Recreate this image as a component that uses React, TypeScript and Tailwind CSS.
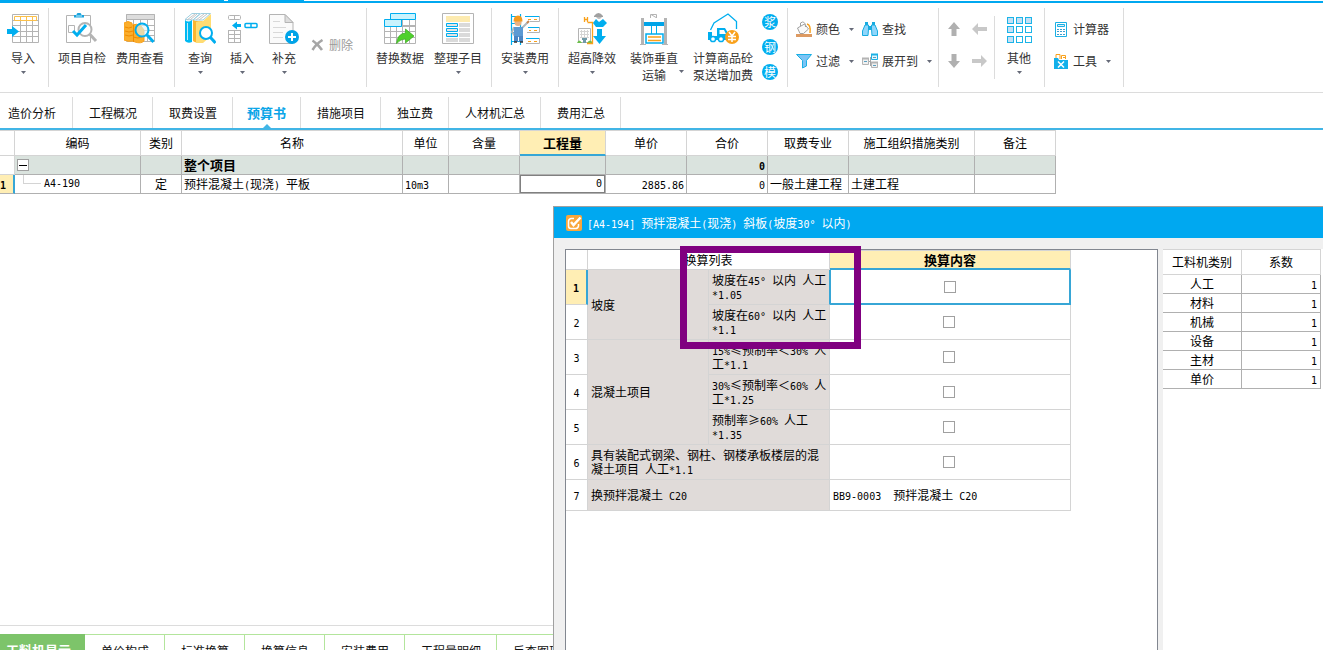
import { Fragment, useState, type ReactNode } from 'react'

const BLUE = '#00aeef'
const GRAY = '#b4b4b4'
const ORANGE = '#f9a11b'

/* ---------- text ---------- */

// Half-width runs are set in a narrow mono face so two of them take one Chinese character
function Mixed({ text }: { text: string }) {
  const parts = text.split(/([\x20-\x7e°]+)/)
  return (
    <>
      {parts.map((p, i) =>
        i % 2 === 1 ? (
          <span key={i} className="whitespace-pre-wrap font-['DejaVu_Sans_Mono',monospace] text-[10px] leading-none">{p}</span>
        ) : (
          <Fragment key={i}>{p}</Fragment>
        ),
      )}
    </>
  )
}

function Caret() {
  return (
    <svg viewBox="0 0 5 3" className="w-[5px] h-[3px] shrink-0" aria-hidden="true">
      <path d="M0 0h5L2.5 3z" fill="#666a78" />
    </svg>
  )
}

/* ---------- ribbon icons ---------- */

function Icon({ children }: { children: ReactNode }) {
  return (
    <svg viewBox="0 0 32 32" className="w-8 h-8 shrink-0" fill="none" aria-hidden="true">
      {children}
    </svg>
  )
}

const ImportIcon = () => (
  <Icon>
    <path d="M5.5 1.5h26v28h-26zM5.5 7.5h26M5.5 12.5h26M5.5 18.5h26M5.5 23.5h26M13.5 7v22M19.5 7v22M25.5 7v22" stroke={GRAY} />
    <path d="M7.5 3.5h22v4h-22zM13.5 3v5M19.5 3v5M25.5 3v5" stroke="#fbc04a" />
    <path d="M0 16h5v-3l7 5.5-7 5.5v-3H0z" fill={BLUE} />
  </Icon>
)

const CheckIcon = () => (
  <Icon>
    <path d="M.5 2.5h24v27H.5z" stroke={GRAY} />
    <path d="M8 4.5V2h2.500c0-3 5-3 5 0H18v2.500z" fill="#1aa3dc" />
    <path d="M10 3h6" stroke="#bdeafa" />
    <path d="M2.5 12.500h6v7h-6z" stroke={GRAY} />
    <circle cx="19" cy="16.5" r="6.500" fill="#fff" stroke={GRAY} strokeWidth="2" />
    <path d="M24 21.500l6 6.500" stroke={GRAY} strokeWidth="3" />
    <path d="M7 18l4 4L20 12" stroke={BLUE} strokeWidth="3" />
  </Icon>
)

const CostIcon = () => (
  <Icon>
    <path d="M2.5 1.5h28v27h-28zM3 12.5h27M3 17.5h27M3 22.5h27M9.5 7v21M16.5 7v21M23.5 7v21" stroke={GRAY} />
    <path d="M2.5 1.5h28v5h-28z" fill="#ddd" stroke={GRAY} />
    <path d="M0 10q4-3 8 0v2q5-2 9 1l3 4v11q-3 3-9 1l-2-1q-5 1-9-1z" fill="#fbae2c" stroke={ORANGE} />
    <path d="M1 14q4 2 7 0M1 18q4 2 8 0M1 22q4 2 8 0M9 24q5 2 9 0M9.5 12v17" stroke="#f08b00" />
    <circle cx="18" cy="17" r="6.5" fill="#d9f3fc" fillOpacity=".6" stroke={BLUE} strokeWidth="2" />
    <path d="M23 22l6.5 7" stroke={BLUE} strokeWidth="3" />
  </Icon>
)

const QueryIcon = () => (
  <Icon>
    <path d="M1 6.5L8 .5h8L9 7zM9 7L17 .5h9.500L19 7z" fill="#fff" stroke="#9fcfe0" />
    <path d="M3 7l8-6M6 7l7-6M12 7l8-6M15 7l8-6" stroke="#c4c4c4" />
    <path d="M1 7q3 3 7 0v22q-4 2-7-1z" fill="#00b9f2" />
    <path d="M3.5 10v17" stroke="#bdeafa" />
    <path d="M9 7q4 2 9 1v20q-5 3-9 0z" fill="#fbb62f" />
    <path d="M12 9l7-1L27 1v22l-8 7h-7z" fill="#ffdc73" />
    <circle cx="22" cy="20" r="6" fill="#fff" stroke={BLUE} strokeWidth="2" />
    <path d="M26.5 24.5l5 5.500" stroke={BLUE} strokeWidth="3" />
  </Icon>
)

const InsertIcon = () => (
  <Icon>
    <rect x="2.5" y="2.5" width="12" height="4" rx="1" stroke={GRAY} />
    <path d="M8.500 2v5M8.500 17v12M2.500 21.500h12M2.500 25.500h12" stroke={GRAY} />
    <rect x="2.5" y="17.5" width="12" height="12" stroke={GRAY} />
    <path d="M6 12.500l5-4v2.500h4v3h-4v2.500z" fill={BLUE} />
    <rect x="19" y="10.5" width="12" height="4" rx="1" stroke={BLUE} strokeWidth="1.5" />
    <path d="M25 10v5" stroke={BLUE} strokeWidth="1.5" />
  </Icon>
)

const AddDocIcon = () => (
  <Icon>
    <path d="M1.5 1.5H17l8 8v21H1.500z" fill="#fafafa" stroke={GRAY} />
    <path d="M17 1.5v8h8z" fill="#ddd" stroke={GRAY} />
    <path d="M5 8.500h7M5 14.500h13M5 19.500h10M5 24.500h10" stroke="#d8d8d8" />
    <circle cx="24" cy="24" r="7" fill="#00a4e8" />
    <path d="M24 20v8M20 24h8" stroke="#fff" strokeWidth="2" />
  </Icon>
)

const ReplaceIcon = () => (
  <Icon>
    <path d="M.5 13.500h31v17H.5zM6.500 13.500V30M12.500 13.500V30M18.500 7V30M25.500 7V30M31.500 7v23M18 12.500h13.500M0 18.500h32M0 24.500h32" stroke={GRAY} />
    <path d="M6.500.5h25v6h-25zM.5 6.500h17v7H.5z" fill="#c9f3fd" stroke={BLUE} />
    <path d="M12.500 30.500q1-10 9-10.500v-4l8.500 7-8.500 7v-4q-5 0-9 4.500z" fill="#4fd02c" stroke="#3aa81e" strokeWidth=".7" />
  </Icon>
)

const ArrangeIcon = () => (
  <Icon>
    <path d="M.5.5h31v30H.5z" stroke={GRAY} />
    <path d="M4 3h24v6H4z" fill="#fdebb0" />
    <path d="M17 10h11v4H17zM17 15h11v4H17zM17 20h11v4H17zM17 25h11v4H17zM4 25h12v4H4z" fill="#dadada" />
    <path d="M4.500 10.500h11v3h-11zM4.500 15.500h11v3h-11zM4.500 20.500h11v3h-11z" fill="#e4e4e4" stroke={BLUE} />
  </Icon>
)

const InstallIcon = () => (
  <Icon>
    <path d="M2.500 1v31M11.500 1v31M2 3.500h10M2 10.500h4M2 19.500h3M2 28.500h10" stroke={BLUE} strokeWidth="1.200" />
    <path d="M30.500 3v5.500H21M30.500 14v5.500H18M30.500 25v5.500H17" stroke={GRAY} />
    <path d="M16 3.500h14M19 14.500h11M17 25.500h13" stroke={BLUE} />
    <path d="M19 6.500h3M25 6.500h3M20 17.500h2M25 17.500h3M19 28.500h3M25 28.500h3" stroke={ORANGE} />
    <path d="M12 16l7-7M5 14l-2 5 3 4" stroke="#b0b7bd" strokeWidth="2" />
    <path d="M18 10l2-2" stroke="#c98550" strokeWidth="2" />
    <circle cx="9" cy="9.500" r="3.500" fill="#e9b183" />
    <path d="M4.500 8.500q0-6 4.500-6t4.500 6z" fill="#f59a1c" />
    <path d="M5 14h9v10H5z" fill="#5c9ad3" />
    <path d="M5 23h4v6H5zM10 23h4v6h-4z" fill="#4b86c4" />
    <path d="M5 29h3M11 29h3" stroke="#333" strokeWidth="1.500" />
  </Icon>
)

const HighRiseIcon = () => (
  <Icon>
    <path d="M2.500 15.500h12v14h-12z" fill="#fff" stroke={GRAY} />
    <path d="M5.500 17v8M8.500 17v8M11.500 17v8M4 18.500h9M4 21.500h9M4 24.500h9" stroke="#d4d4d4" />
    <path d="M6 25h5v2H6zM7 27h3v3H7z" fill="#6f9aa8" />
    <path d="M1 30q2-5 5 0zM11 30q3-5 6 0z" fill="#6cbf4b" />
    <path d="M8.500 4v5M11.500 4v5M8.500 6.500h3M11.500 9.500h6M16.500 9v21.500H11" stroke={ORANGE} strokeWidth="1.300" />
    <path d="M18 3q4.500-6 9 0v1h-9z" fill="#a0a0a0" />
    <path d="M20 4h6q-3 4-6 0z" fill="#bbb" />
    <path d="M17 10l3-4 3 3 4-3 4 4-4 4h-7z" fill={BLUE} />
    <path d="M21 16h5v7h4l-6.500 8-6.500-8h4z" fill={BLUE} />
  </Icon>
)

const LiftIcon = () => (
  <Icon>
    <path d="M4.500 5v26M27.500 5v26" stroke={GRAY} strokeWidth="3" />
    <path d="M2 31.500h6M24 31.500h6" stroke={GRAY} />
    <path d="M12.500 5V1.500h6V5M13 1.500l5 3" stroke={GRAY} />
    <path d="M6 9h20v4H6z" fill="#00a4e8" />
    <path d="M13.500 13v8M18.500 13v8" stroke={BLUE} />
    <path d="M8 21h17v9H8z" stroke={BLUE} strokeWidth="1.500" />
    <path d="M10 24h13M10 27.500h13" stroke={ORANGE} strokeWidth="1.600" />
  </Icon>
)

const TruckIcon = () => (
  <Icon>
    <path d="M3.500 17L7 10 21 1l8.500 7.500V16" stroke={BLUE} strokeWidth="1.300" />
    <path d="M1 19h4v4h5v-8h8l3 5v7H1z" fill={BLUE} />
    <path d="M12.500 17h4.500l2 4h-6.500z" fill="#fff" />
    <circle cx="6" cy="26" r="2.600" fill="#fff" stroke={BLUE} strokeWidth="1.500" />
    <circle cx="14" cy="26" r="2.600" fill="#fff" stroke={BLUE} strokeWidth="1.500" />
    <circle cx="25" cy="24" r="7" fill={ORANGE} />
    <path d="M22 19l3 4 3-4M21 23.500h8M21 26.500h8M25 23v6" stroke="#fff" strokeWidth="1.500" />
  </Icon>
)

const OthersIcon = () => (
  <Icon>
    {[4, 13, 23].map((y, r) =>
      [4, 13, 22].map((x, c) => (
        <rect key={`${x}-${y}`} x={x + 0.5} y={y + 0.5} width="6" height="6" fill={r === 0 || c === 0 ? '#c5e0f5' : '#fff'} stroke="#1bb4e8" />
      )),
    )}
  </Icon>
)

/* ---------- small icons ---------- */

function Small({ children }: { children: ReactNode }) {
  return (
    <svg viewBox="0 0 16 16" className="w-4 h-4 shrink-0" fill="none" aria-hidden="true">
      {children}
    </svg>
  )
}

const BucketIcon = () => (
  <Small>
    <path d="M0 13h16v3H0z" fill="#dd9a62" />
    <path d="M1.500 7l7-4 4 5-5 4.500H4z" fill="#fafafa" stroke="#a0a0a0" />
    <path d="M4.500 5q-1-4 2-4t3 5" stroke="#a0a0a0" />
    <path d="M11 3q4 1 3 9" stroke={ORANGE} strokeWidth="1.500" />
  </Small>
)

const FunnelIcon = () => (
  <Small>
    <path d="M.5 1.500h15L10.500 7.500V13l-4 2V7.500z" fill="#7cc4f5" stroke="#1bb0e4" />
  </Small>
)

const BinocularsIcon = () => (
  <Small>
    <path d="M3 4h3.500v4L6 14.500H.5V10zM13 4H9.500v4l.5 6.500h5.500V10z" fill="#8fd6fb" stroke="#16abe0" />
    <path d="M3 1h3v3H3zM10 1h3v3h-3zM6.500 5h3v4h-3z" fill="#16abe0" />
  </Small>
)

const ExpandIcon = () => (
  <Small>
    <path d="M6 8.500h3M8.500 4v9" stroke="#a5a5a5" />
    <path d="M9.500 1.500h6v5h-6z" fill="#e4f5fc" stroke="#1bb0e4" />
    <path d="M.5 5.500h6v6h-6zM9.500 9.500h6v5h-6z" fill="#f0f0f0" stroke="#b4b4b4" />
    <path d="M9 1.500h7" stroke="#1bb0e4" strokeWidth="2" />
    <path d="M0 5.500h7M9 9.500h7" stroke="#b4b4b4" strokeWidth="2" />
    <path d="M2 8.500h3M11 4.500h3M11 12.500h3" stroke="#5a9fc0" />
  </Small>
)

const CalculatorIcon = () => (
  <Small>
    <path d="M2.500 1.500h11v14h-11z" fill="#fff" stroke="#1bb0e4" />
    <path d="M4.500 3.500h7v2h-7z" fill="#d9f0fb" stroke="#1bb0e4" />
    <path d="M4 8.500h8M4 10.500h8M4 13.500h8" stroke="#3f9fd0" strokeDasharray="2 1" />
  </Small>
)

const ToolboxIcon = () => (
  <Small>
    <path d="M3 6V1.500h4V6M8.500 6V2.500h4V6" fill="#fff" stroke={ORANGE} />
    <path d="M10 4.500h3" stroke={ORANGE} />
    <path d="M1 5h4l1 2h9v9H1z" fill="#12b0ea" />
    <path d="M5 8.500l6 6M11 8.500l-6 6" stroke="#fff" strokeWidth="1.500" />
  </Small>
)

const DeleteIcon = () => (
  <svg viewBox="0 0 13 12" className="w-[13px] h-3 shrink-0" fill="none" aria-hidden="true">
    <path d="M1.500 1.500Q7 5 11 11M11.500 1Q5 5 1.500 11" stroke="#a6a6a6" strokeWidth="2.500" />
  </svg>
)

function MoveIcon({ d, color }: { d: string; color: string }) {
  return (
    <Small>
      <path d={d} fill={color} />
    </Small>
  )
}

/* ---------- ribbon ---------- */

function Group({ className = '', children }: { className?: string; children: ReactNode }) {
  return <div className={`flex shrink-0 items-start border-r border-[#dcdcdc] ${className}`}>{children}</div>
}

type BigProps = { icon: ReactNode; label: string; second?: string; menu?: boolean; width: string }

function BigButton({ icon, label, second, menu, width }: BigProps) {
  return (
    <button type="button" className={`flex shrink-0 flex-col items-center pt-[5px] ${width}`}>
      {icon}
      <span className="mt-1 h-[17px] whitespace-nowrap leading-[17px]">{label}</span>
      {second ? (
        <span className="relative h-[17px] whitespace-nowrap leading-[17px]">
          {second}
          {menu && <span className="absolute -right-[18px] top-1 leading-none"><Caret /></span>}
        </span>
      ) : (
        menu && <span className="mt-[5px]"><Caret /></span>
      )}
    </button>
  )
}

function SmallButton({ icon, label, menu }: { icon: ReactNode; label: string; menu?: boolean }) {
  return (
    <button type="button" className="flex h-8 items-center gap-1 whitespace-nowrap">
      {icon}
      <span>{label}</span>
      {menu && <span className="ml-[5px]"><Caret /></span>}
    </button>
  )
}

const moves = [
  { label: '上移', d: 'M8 1l6 7h-3.500v7h-5V8H2z', color: '#b0b0b0' },
  { label: '升级', d: 'M0 8l6-6v4h9v4H6v4z', color: '#c8c8c8' },
  { label: '下移', d: 'M8 15l6-7h-3.500V1h-5v7H2z', color: '#b0b0b0' },
  { label: '降级', d: 'M15 8L9 2v4H0v4h9v4z', color: '#c8c8c8' },
]

function Ribbon() {
  return (
    <header className="shrink-0">
      <div className="flex h-px bg-white">
        <span className="w-56 bg-[#00a8f0]" />
        <span className="ml-1 w-[76px] bg-[#00a8f0]" />
      </div>
      <div className="h-0.5 bg-[#00a8f0]" />
      <div className="flex h-[90px] border-b border-[#dcdcdc] py-[5px] font-['Noto_Sans_CJK_SC',sans-serif] text-xs text-[#333]">
        <Group className="pl-[3px] pr-[5px]">
          <BigButton icon={<ImportIcon />} label="导入" menu width="w-10" />
        </Group>
        <Group className="pl-1 pr-[5px]">
          <BigButton icon={<CheckIcon />} label="项目自检" width="w-[58px]" />
          <BigButton icon={<CostIcon />} label="费用查看" width="w-[58px]" />
        </Group>
        <Group className="pl-1 pr-[13px]">
          <BigButton icon={<QueryIcon />} label="查询" menu width="w-[42px]" />
          <BigButton icon={<InsertIcon />} label="插入" menu width="w-[42px]" />
          <BigButton icon={<AddDocIcon />} label="补充" menu width="w-[42px]" />
          <button type="button" disabled className="mt-[29px] ml-1.5 flex h-4 items-center gap-[5px] text-[#9a9a9a]">
            <DeleteIcon />
            删除
          </button>
        </Group>
        <Group className="px-1">
          <BigButton icon={<ReplaceIcon />} label="替换数据" width="w-[58px]" />
          <BigButton icon={<ArrangeIcon />} label="整理子目" menu width="w-[58px]" />
        </Group>
        <Group className="px-1">
          <BigButton icon={<InstallIcon />} label="安装费用" menu width="w-[58px]" />
        </Group>
        <Group className="pl-1 pr-1.5">
          <BigButton icon={<HighRiseIcon />} label="超高降效" menu width="w-[58px]" />
          <BigButton icon={<LiftIcon />} label="装饰垂直" second="运输" menu width="w-[66px]" />
          <BigButton icon={<TruckIcon />} label="计算商品砼" second="泵送增加费" width="w-[72px]" />
          <div className="flex w-[22px] flex-col items-center gap-[9px] pt-1.5">
            {['浆', '钢', '模'].map(c => (
              <button key={c} type="button" className="size-4 rounded-full bg-[#00aeef] text-xs leading-4 text-white">{c}</button>
            ))}
          </div>
        </Group>
        <Group className="pl-2 pt-[5px]">
          <div className="w-[66px]">
            <SmallButton icon={<BucketIcon />} label="颜色" menu />
            <SmallButton icon={<FunnelIcon />} label="过滤" menu />
          </div>
          <div className="w-[76px]">
            <SmallButton icon={<BinocularsIcon />} label="查找" />
            <SmallButton icon={<ExpandIcon />} label="展开到" menu />
          </div>
        </Group>
        <Group className="my-2 pl-0.5 pr-px">
          <div className="-mt-[3px] grid grid-cols-2">
            {moves.map(m => (
              <button key={m.label} type="button" aria-label={m.label} className="flex h-8 w-[26px] items-center justify-center">
                <MoveIcon d={m.d} color={m.color} />
              </button>
            ))}
          </div>
        </Group>
        <Group className="pr-px">
          <BigButton icon={<OthersIcon />} label="其他" menu width="w-12" />
        </Group>
        <Group className="pt-[5px] pl-2 pr-3">
          <div>
            <SmallButton icon={<CalculatorIcon />} label="计算器" />
            <SmallButton icon={<ToolboxIcon />} label="工具" menu />
          </div>
        </Group>
      </div>
    </header>
  )
}

/* ---------- main tabs ---------- */

const mainTabs = [
  { label: '造价分析', pad: 'pl-2 pr-4' },
  { label: '工程概况', pad: 'pl-4 pr-[15px]' },
  { label: '取费设置', pad: 'pl-4 pr-[15px]' },
  { label: '预算书', pad: 'px-3.5' },
  { label: '措施项目', pad: 'pl-4 pr-[15px]' },
  { label: '独立费', pad: 'pl-4 pr-[15px]' },
  { label: '人材机汇总', pad: 'pl-4 pr-[15px]' },
  { label: '费用汇总', pad: 'pl-4 pr-[15px]' },
]

function MainTabs() {
  const [active, setActive] = useState('预算书')
  return (
    <nav className="flex shrink-0 border-b-2 border-[#41b5e6] pt-1 text-xs">
      {mainTabs.map(t => (
        <button
          key={t.label}
          type="button"
          onClick={() => setActive(t.label)}
          className={`relative h-[31px] shrink-0 whitespace-nowrap border-r border-[#dcdcdc] ${t.pad} ${
            active === t.label ? 'text-[13px] font-bold text-[#0aa5e8]' : 'text-[#111]'
          }`}
        >
          {t.label}
          {active === t.label && (
            <svg viewBox="0 0 8 4" className="absolute bottom-0 left-1/2 -ml-1 w-2 h-1" aria-hidden="true">
              <path d="M0 4l4-4 4 4z" fill="#41b5e6" />
            </svg>
          )}
        </button>
      ))}
    </nav>
  )
}

/* ---------- budget table ---------- */

const columns = [
  { label: '编码', width: 'w-[126px]' },
  { label: '类别', width: 'w-[41px]' },
  { label: '名称', width: 'w-[221px]' },
  { label: '单位', width: 'w-[46px]' },
  { label: '含量', width: 'w-[71px]' },
  { label: '工程量', width: 'w-[86px]' },
  { label: '单价', width: 'w-[81px]' },
  { label: '合价', width: 'w-[81px]' },
  { label: '取费专业', width: 'w-[81px]' },
  { label: '施工组织措施类别', width: 'w-[126px]' },
  { label: '备注', width: 'w-[81px]' },
]

const td = 'border-r border-b border-[#b0b0b0] whitespace-nowrap overflow-hidden py-0'
const tdLeft = `${td} pl-0.5 pr-0`
const tdRight = `${td} pl-0 pr-0.5 text-right`

function BudgetTable() {
  return (
    <table className="w-[1056px] table-fixed border-separate border-spacing-0 text-xs leading-[18px] text-black">
      <thead>
        <tr className="h-[26px]">
          <th className="w-[15px] border-y border-r border-[#d4d4d4]" aria-label="行号" />
          {columns.map(c => (
            <th
              key={c.label}
              className={`border-t border-r p-0 ${c.width} ${
                c.label === '工程量' ? 'border-[#d4d4d4] border-b-2 border-b-[#37a6d6] bg-[#ffeeb4] text-[13px] font-bold' : 'border-b border-[#d4d4d4] font-normal'
              }`}
            >
              {c.label}
            </th>
          ))}
        </tr>
      </thead>
      <tbody>
        <tr className="h-[19px] bg-[#dae3de] text-[13px] font-bold">
          <td className="border-r border-b border-[#d4d4d4] bg-white p-0" />
          <td className={tdLeft}>
            <button type="button" aria-label="折叠" className="flex size-3 items-center justify-center border border-[#a0a0a0] bg-white">
              <span className="h-px w-2 bg-black" />
            </button>
          </td>
          <td className={td} />
          <td className={tdLeft}>整个项目</td>
          <td className={td} />
          <td className={td} />
          <td className={td} />
          <td className={td} />
          <td className={tdRight}><Mixed text="0" /></td>
          <td className={td} />
          <td className={td} />
          <td className={td} />
        </tr>
        <tr className="h-[19px]">
          <td className="border-b border-[#b0b0b0] border-r-2 border-r-[#37a6d6] bg-[#ffeeb4] p-0 font-bold"><Mixed text="1" /></td>
          <td className={`${td} px-0`}>
            <div className="flex h-[18px] items-center">
              <span className="ml-2 mr-[3px] h-[9px] w-[18px] self-start border-b border-l border-[#d4d4d4]" />
              <Mixed text="A4-190" />
            </div>
          </td>
          <td className={`${td} px-0 text-center`}>定</td>
          <td className={tdLeft}><Mixed text="预拌混凝土(现浇) 平板" /></td>
          <td className={tdLeft}><Mixed text="10m3" /></td>
          <td className={td} />
          <td className={`${td} px-0`}>
            <input
              aria-label="工程量"
              defaultValue="0"
              className="block h-[18px] w-full border border-[#808080] px-0.5 text-right font-['DejaVu_Sans_Mono',monospace] text-[10px] outline outline-[#808080]"
            />
          </td>
          <td className={tdRight}><Mixed text="2885.86" /></td>
          <td className={tdRight}><Mixed text="0" /></td>
          <td className={tdLeft}>一般土建工程</td>
          <td className={tdLeft}>土建工程</td>
          <td className={td} />
        </tr>
      </tbody>
    </table>
  )
}

/* ---------- conversion dialog ---------- */

const rules: { group?: string; span?: number; text: string }[] = [
  { group: '坡度', span: 2, text: '坡度在45° 以内 人工*1.05' },
  { text: '坡度在60° 以内 人工*1.1' },
  { group: '混凝土项目', span: 3, text: '15%≤预制率＜30% 人工*1.1' },
  { text: '30%≤预制率＜60% 人工*1.25' },
  { text: '预制率≥60% 人工*1.35' },
]

const num = 'border-r border-b border-[#d4d4d4] p-0 text-center'
const rule = 'border-r border-b border-[#d4d4d4] bg-[#e0dbd9] p-0 pl-[3px]'

function RuleCheck({ label }: { label: string }) {
  return (
    <input
      type="checkbox"
      aria-label={label}
      className="block mx-auto size-3 appearance-none border border-[#a0a0a0] bg-white checked:bg-[#37a6d6]"
    />
  )
}

function RuleTable() {
  return (
    <table className="w-[505px] table-fixed border-separate border-spacing-0 text-xs leading-[14px] text-black">
      <colgroup>
        <col className="w-[22px]" />
        <col className="w-[121px]" />
        <col className="w-[121px]" />
        <col className="w-[241px]" />
      </colgroup>
      <thead>
        <tr className="h-5">
          <th className="border-r border-b border-[#d4d4d4] p-0" aria-label="行号" />
          <th colSpan={2} className="border-r border-b border-[#d4d4d4] p-0 font-normal">换算列表</th>
          <th className="border-t border-r border-b-2 border-[#d4d4d4] border-b-[#37a6d6] bg-[#ffeeb4] p-0 text-[13px] font-bold">换算内容</th>
        </tr>
      </thead>
      <tbody>
        {rules.map((r, i) => (
          <tr key={r.text} className="h-[35px]">
            <td className={i === 0 ? 'border-b border-[#d4d4d4] border-r-2 border-r-[#37a6d6] bg-[#ffeeb4] p-0 text-center font-bold' : num}>
              <Mixed text={String(i + 1)} />
            </td>
            {r.group && <td rowSpan={r.span} className={rule}>{r.group}</td>}
            <td className={i === 0 ? `${rule} border-r-[#37a6d6]` : rule}><Mixed text={r.text} /></td>
            <td className={i === 0 ? 'border-2 border-t-0 border-l border-[#37a6d6] p-0' : 'border-r border-b border-[#d4d4d4] p-0 pr-0.5'}>
              <RuleCheck label={r.text} />
            </td>
          </tr>
        ))}
        <tr className="h-[35px]">
          <td className={num}><Mixed text="6" /></td>
          <td colSpan={2} className={rule}><Mixed text="具有装配式钢梁、钢柱、钢楼承板楼层的混凝土项目 人工*1.1" /></td>
          <td className="border-r border-b border-[#d4d4d4] p-0 pr-0.5"><RuleCheck label="装配式楼层" /></td>
        </tr>
        <tr className="h-[31px]">
          <td className={num}><Mixed text="7" /></td>
          <td colSpan={2} className={rule}><Mixed text="换预拌混凝土 C20" /></td>
          <td className="border-r border-b border-[#d4d4d4] p-0 pl-[3px]"><Mixed text="BB9-0003  预拌混凝土 C20" /></td>
        </tr>
      </tbody>
    </table>
  )
}

function FactorTable() {
  return (
    <table className="w-[158px] table-fixed border-separate border-spacing-0 text-xs leading-[18px] text-black">
      <thead>
        <tr className="h-[26px]">
          <th className="w-[79px] border-y border-r border-[#d4d4d4] p-0 font-normal">工料机类别</th>
          <th className="border-y border-r border-[#d4d4d4] p-0 font-normal">系数</th>
        </tr>
      </thead>
      <tbody>
        {['人工', '材料', '机械', '设备', '主材', '单价'].map(k => (
          <tr key={k} className="h-[19px]">
            <td className={`${td} px-0 text-center`}>{k}</td>
            <td className={`${td} pl-0 pr-[3px] text-right`}><Mixed text="1" /></td>
          </tr>
        ))}
      </tbody>
    </table>
  )
}

function ConversionDialog() {
  return (
    <section
      role="dialog"
      aria-labelledby="dialog-title"
      className="absolute top-[206px] right-0 bottom-0 left-[553px] flex flex-col border-t border-l border-[#a0a0a0] bg-[#f0f0f0]"
    >
      <div className="flex h-[31px] shrink-0 items-center gap-[5px] bg-[#00a8f0] pl-3 text-xs text-white">
        <svg viewBox="0 0 16 16" className="w-4 h-4" fill="none" aria-hidden="true">
          <rect width="16" height="16" rx="2" fill="#f9a63a" />
          <path d="M8 3.500H5Q2.500 4 2.500 6.500V11q0 2.500 2.500 2.500h4.500q2.500 0 3-2.500V9" stroke="#fff" strokeWidth="1.500" />
          <path d="M5 7l2.500 3L14.500 2.500" stroke="#fff" strokeWidth="2.500" />
        </svg>
        <h2 id="dialog-title"><Mixed text="[A4-194] 预拌混凝土(现浇) 斜板(坡度30° 以内)" /></h2>
      </div>
      <div className="flex min-h-0 flex-1 gap-[5px] pt-[11px] pl-[11px]">
        <div className="flex-1 overflow-hidden border border-b-0 border-[#828790] bg-white">
          <RuleTable />
        </div>
        <div className="w-40 shrink-0 overflow-hidden bg-white">
          <FactorTable />
        </div>
      </div>
    </section>
  )
}

/* ---------- bottom tabs ---------- */

const detailTabs = ['单价构成', '标准换算', '换算信息', '安装费用', '工程量明细', '反查图形工程量']

function DetailTabs() {
  return (
    <nav className="h-6 shrink-0 pt-2 text-xs text-[#111]">
      <div className="flex h-8">
        <button type="button" className="w-[85px] shrink-0 bg-[#7dc46a] pr-2 text-[13px] font-bold text-white">工料机显示</button>
        {detailTabs.map(t => (
          <button key={t} type="button" className="shrink-0 whitespace-nowrap border-t border-r border-[#b3e59c] pr-[15px] pl-4">{t}</button>
        ))}
      </div>
    </nav>
  )
}

export default function App() {
  return (
    <div className="relative flex h-screen flex-col overflow-hidden bg-white font-['Noto_Sans_CJK_SC',sans-serif]">
      <Ribbon />
      <MainTabs />
      <main className="min-h-0 flex-1 overflow-hidden border-b border-[#dcdcdc]">
        <BudgetTable />
      </main>
      <DetailTabs />
      <ConversionDialog />
      {/* marker around the slope rules */}
      <div className="pointer-events-none absolute top-[246px] left-[680px] h-[103px] w-[181px] border-[7px] border-[#800080]" />
    </div>
  )
}
